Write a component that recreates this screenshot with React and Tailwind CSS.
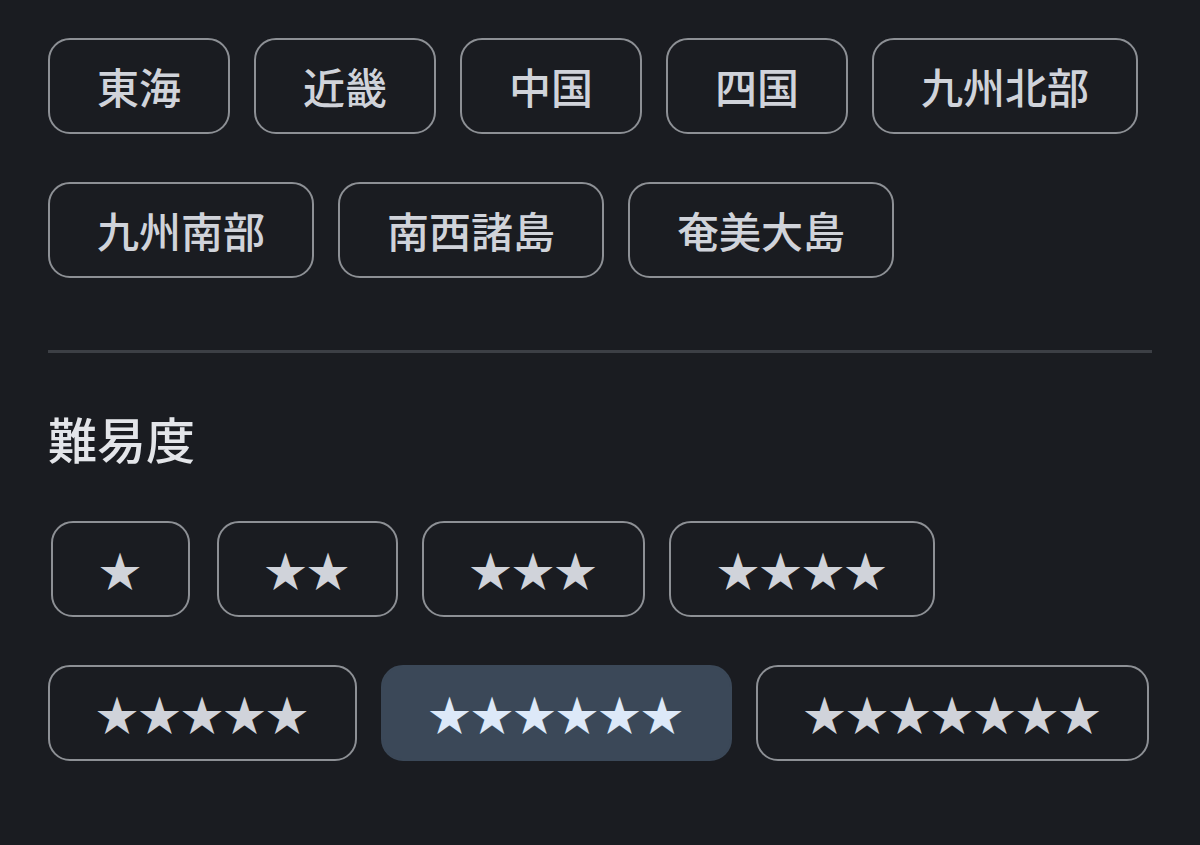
const regions = ["東海", "近畿", "中国", "四国", "九州北部", "九州南部", "南西諸島", "奄美大島"];
const levels = [1, 2, 3, 4, 5, 6, 7];

const Chip = ({ label, active, star, className = "" }) => (
  <button
    className={`h-[96px] rounded-[22px] border-2 flex items-center justify-center leading-none font-medium text-[42px] ${
      star ? "px-[46px] tracking-[0.5px]" : "px-[47px]"
    } ${active ? "bg-[#3b4858] border-[#3b4858] text-[#dde9f8]" : "bg-transparent border-[#8d9095] text-[#d0d3da]"} ${className}`}
  >
    {label}
  </button>
);

export default function App() {
  return (
    <div
      className="min-h-screen w-full bg-[#1a1c21] px-12 pt-[38px]"
      style={{ fontFamily: '"Noto Sans CJK JP", "Noto Sans", sans-serif' }}
    >
      {/* 地域 */}
      <div className="flex flex-wrap gap-x-6">
        {regions.slice(0, 5).map((r) => (
          <Chip key={r} label={r} />
        ))}
      </div>
      <div className="flex flex-wrap gap-x-6 mt-12">
        {regions.slice(5).map((r) => (
          <Chip key={r} label={r} />
        ))}
      </div>

      <div className="h-[3px] bg-[#3c3f45] mt-[72px]" />

      {/* 難易度 */}
      <h2 className="mt-[57px] text-[49px] leading-[56px] font-medium text-[#e3e5e9]">難易度</h2>

      <div className="flex gap-x-6 mt-[55px]">
        {levels.slice(0, 4).map((n) => (
          <Chip key={n} star label={"★".repeat(n)} className={n === 1 ? "mx-[3px]" : ""} />
        ))}
      </div>
      <div className="flex gap-x-6 mt-12">
        {levels.slice(4).map((n) => (
          <Chip key={n} star label={"★".repeat(n)} active={n === 6} />
        ))}
      </div>
    </div>
  );
}
